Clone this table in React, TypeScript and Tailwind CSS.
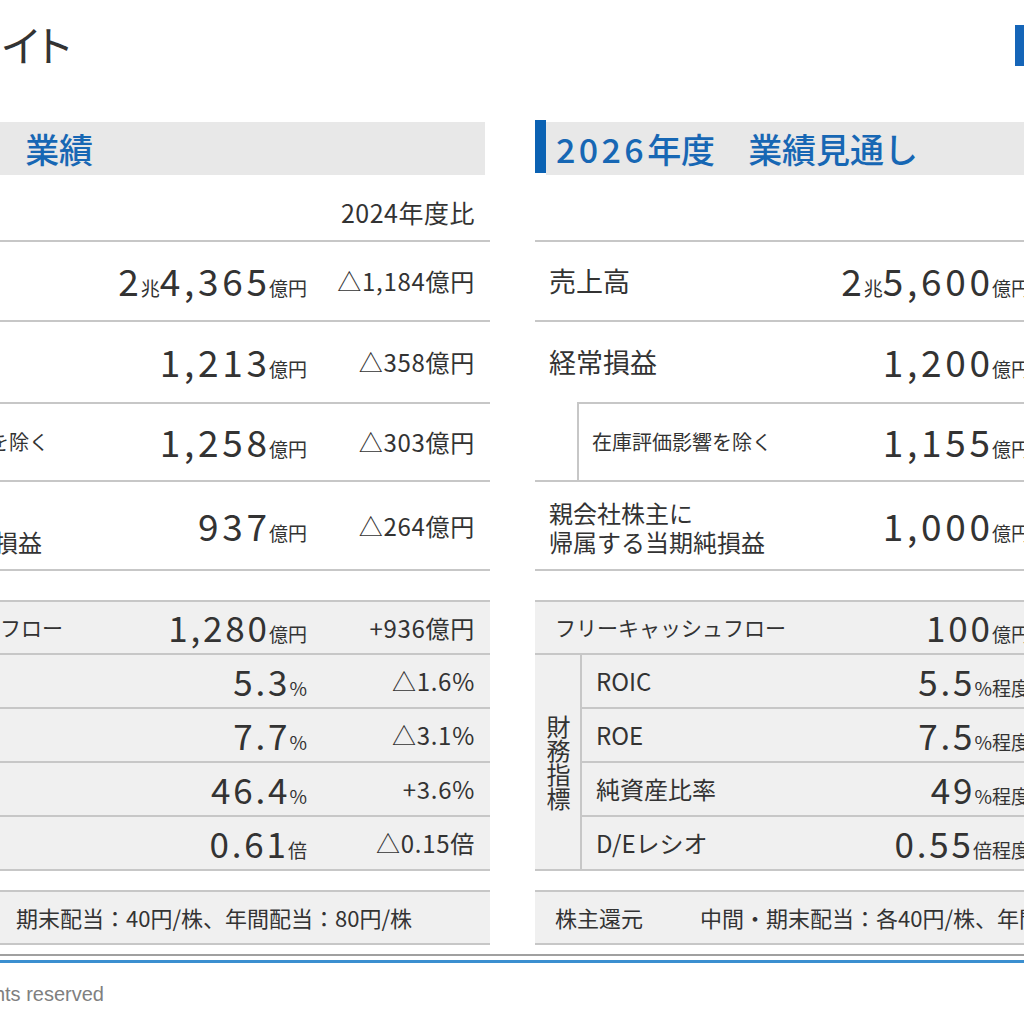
import React from "react";

type Part = { t: string; u?: boolean };

const n = (t: string): Part => ({ t });
const u = (t: string): Part => ({ t, u: true });

interface Row {
  label: React.ReactNode;
  value: Part[];
  change?: string;
}

const leftTop: Row[] = [
  { label: "売上高", value: [n("2"), u("兆"), n("4,365"), u("億円")], change: "△1,184億円" },
  { label: "経常損益", value: [n("1,213"), u("億円")], change: "△358億円" },
  { label: "在庫評価影響を除く", value: [n("1,258"), u("億円")], change: "△303億円" },
  {
    label: (
      <>
        親会社株主に
        <br />
        帰属する当期純損益
      </>
    ),
    value: [n("937"), u("億円")],
    change: "△264億円",
  },
];

const rightTop: Row[] = [
  { label: "売上高", value: [n("2"), u("兆"), n("5,600"), u("億円")] },
  { label: "経常損益", value: [n("1,200"), u("億円")] },
  { label: "在庫評価影響を除く", value: [n("1,155"), u("億円")] },
  {
    label: (
      <>
        親会社株主に
        <br />
        帰属する当期純損益
      </>
    ),
    value: [n("1,000"), u("億円")],
  },
];

const leftFcf: Row = { label: "フリーキャッシュフロー", value: [n("1,280"), u("億円")], change: "+936億円" };
const rightFcf: Row = { label: "フリーキャッシュフロー", value: [n("100"), u("億円")] };

const leftRatios: Row[] = [
  { label: "ROIC", value: [n("5.3"), u("%")], change: "△1.6%" },
  { label: "ROE", value: [n("7.7"), u("%")], change: "△3.1%" },
  { label: "純資産比率", value: [n("46.4"), u("%")], change: "+3.6%" },
  { label: "D/Eレシオ", value: [n("0.61"), u("倍")], change: "△0.15倍" },
];

const rightRatios: Row[] = [
  { label: "ROIC", value: [n("5.5"), u("%程度")] },
  { label: "ROE", value: [n("7.5"), u("%程度")] },
  { label: "純資産比率", value: [n("49"), u("%程度")] },
  { label: "D/Eレシオ", value: [n("0.55"), u("倍程度")] },
];

function Value({ parts, small }: { parts: Part[]; small?: boolean }) {
  return (
    <div className="w-[200px] shrink-0 flex items-baseline justify-end whitespace-nowrap">
      {parts.map((p, i) =>
        p.u ? (
          <span key={i} className="text-[19px] ml-[2px]">
            {p.t}
          </span>
        ) : (
          <span
            key={i}
            className={
              small
                ? "text-[35px] tracking-[0.08em] mr-[-0.08em]"
                : "text-[37px] tracking-[0.1em] mr-[-0.1em]"
            }
          >
            {p.t}
          </span>
        )
      )}
    </div>
  );
}

function Change({ text }: { text?: string }) {
  return (
    <div className="w-[183px] shrink-0 pr-[15px] text-right text-[24px] tracking-[0.03em] whitespace-nowrap">
      {text}
    </div>
  );
}

function Panel({
  year,
  compare,
  top,
  fcf,
  ratios,
  dividend,
  dividendStart,
}: {
  year: string;
  compare?: string;
  top: Row[];
  fcf: Row;
  ratios: Row[];
  dividend: string;
  dividendStart: string;
}) {
  return (
    <div className="w-[678px] shrink-0 flex flex-col">
      {/* section header */}
      <div className="h-[55px] mr-[5px] flex">
        <div className="w-[11px] h-[53px] bg-[#0b62b3]" />
        <div className="flex-1 mt-[2px] bg-[#e8e8e8] flex items-center pl-[10px] text-[34px] font-medium text-[#1767b4] leading-none whitespace-nowrap">
          <span className="tracking-[0.1em]">{year}</span>
          <span>年度</span>
          <span className="ml-[33px]">{compare ? "業績" : "業績見通し"}</span>
        </div>
      </div>

      <div className="h-[65px] flex items-end justify-end pr-[15px] pb-[14px] text-[25px] leading-[28px] tracking-[0.02em]">
        {compare}
      </div>

      {/* main figures */}
      <div className="border-t-2 border-[#c7c7c7]">
        <div className="h-[80px] flex items-center border-b-2 border-[#c7c7c7]">
          <div className="flex-1 pl-[14px] text-[27px]">{top[0].label}</div>
          <Value parts={top[0].value} />
          <Change text={top[0].change} />
        </div>
        <div className="h-[80px] flex items-center">
          <div className="flex-1 pl-[14px] text-[27px]">{top[1].label}</div>
          <Value parts={top[1].value} />
          <Change text={top[1].change} />
        </div>
        <div className="h-[80px] border-b-2 border-[#c7c7c7]">
          <div className="ml-[42px] h-full flex items-center border-l-2 border-t-2 border-[#c7c7c7]">
            <div className="flex-1 pl-[13px] text-[20px]">{top[2].label}</div>
            <Value parts={top[2].value} />
            <Change text={top[2].change} />
          </div>
        </div>
        <div className="h-[89px] flex items-center border-b-2 border-[#c7c7c7]">
          <div className="flex-1 pl-[14px] text-[24px] leading-[29px] mt-[2px]">{top[3].label}</div>
          <Value parts={top[3].value} />
          <Change text={top[3].change} />
        </div>
      </div>

      {/* cash flow & ratios */}
      <div className="mt-[29px] bg-[#f0f0f0] border-t-2 border-b-2 border-[#c7c7c7]">
        <div className="h-[53px] flex items-center border-b-2 border-[#c7c7c7]">
          <div className="flex-1 pl-[20px] text-[21px] whitespace-nowrap">{fcf.label}</div>
          <Value parts={fcf.value} small />
          <Change text={fcf.change} />
        </div>
        <div className="flex">
          <div className="w-[47px] shrink-0 border-r-2 border-[#c7c7c7] flex flex-col items-center justify-center text-[24px] leading-[24px] pl-[2px]">
            <span>財</span>
            <span>務</span>
            <span>指</span>
            <span>標</span>
          </div>
          <div className="flex-1 flex flex-col">
            {ratios.map((r, i) => (
              <div
                key={i}
                className={
                  i < ratios.length - 1
                    ? "h-[54px] flex items-center border-b-2 border-[#c7c7c7]"
                    : "h-[52px] flex items-center"
                }
              >
                <div className="flex-1 pl-[14px] text-[24px] whitespace-nowrap">{r.label}</div>
                <Value parts={r.value} small />
                <Change text={r.change} />
              </div>
            ))}
          </div>
        </div>
      </div>

      {/* shareholder return */}
      <div className="mt-[19px] h-[55px] bg-[#f0f0f0] border-t-2 border-b-2 border-[#c7c7c7] flex items-center text-[22px] whitespace-nowrap">
        <div className={`${dividendStart} shrink-0 pl-[20px]`}>株主還元</div>
        <div>{dividend}</div>
      </div>
    </div>
  );
}

export default function App() {
  return (
    <div className="w-[1024px] h-[1024px] overflow-hidden bg-white text-[#333333] font-['Noto_Sans_CJK_JP','Noto_Sans',sans-serif]">
      {/* page title */}
      <div className="h-[120px] flex items-start">
        <div className="ml-[-195px] mt-[20px] text-[42px] leading-[48px] whitespace-nowrap [font-feature-settings:'palt']">
          決算ハイライト
        </div>
        <div className="ml-auto mt-[25px] w-[9px] h-[41px] bg-[#1565b8]" />
      </div>

      {/* two panels */}
      <div className="ml-[-188px] flex gap-[45px]">
        <Panel
          year="2025"
          compare="2024年度比"
          top={leftTop}
          fcf={leftFcf}
          ratios={leftRatios}
          dividend="期末配当：40円/株、年間配当：80円/株"
          dividendStart="w-[204px]"
        />
        <Panel
          year="2026"
          top={rightTop}
          fcf={rightFcf}
          ratios={rightRatios}
          dividend="中間・期末配当：各40円/株、年間配当：80円/株"
          dividendStart="w-[165px]"
        />
      </div>

      {/* footer */}
      <div className="mt-[9px] h-[2px] bg-[#a0a0a0]" />
      <div className="mt-[4px] h-[3px] bg-[#3b8fd0]" />
      <div className="mt-[20px] w-[104px] flex justify-end">
        <span className="whitespace-nowrap text-[20px] leading-[22px] text-[#808080] font-['Liberation_Sans',Arial,sans-serif]">
          Copyright © 2026 Corporation All rights reserved
        </span>
      </div>
    </div>
  );
}
